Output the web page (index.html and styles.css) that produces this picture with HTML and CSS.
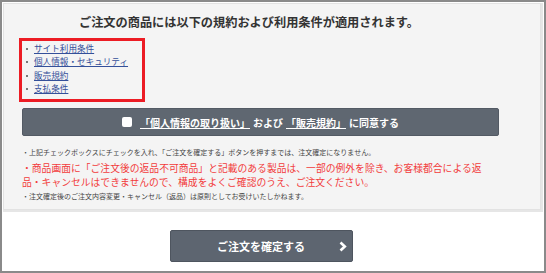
FILE: index.html
```html
<!DOCTYPE html>
<html lang="ja">
<head>
  <meta charset="UTF-8" />
  <meta name="viewport" content="width=device-width, initial-scale=1.0" />
  <title>ご注文の確認</title>
  <link rel="stylesheet" href="styles.css">
</head>
<body>

  <div class="frame">
    <div class="terms-box">
      <h2 class="terms-title">ご注文の商品には以下の規約および利用条件が適用されます。</h2>

      <ul class="terms-links">
        <li><a href="#">サイト利用条件</a></li>
        <li><a href="#">個人情報・セキュリティ</a></li>
        <li><a href="#">販売規約</a></li>
        <li><a href="#">支払条件</a></li>
      </ul>

      <label class="agree-bar">
        <span class="agree-check"></span>
        <span class="agree-text"><a href="#">「個人情報の取り扱い」</a>および<a href="#">「販売規約」</a>に同意する</span>
      </label>

      <div class="notes">
        <p class="note">・上記チェックボックスにチェックを入れ、「ご注文を確定する」ボタンを押すまでは、注文確定になりません。</p>
        <p class="warn">・商品画面に「ご注文後の返品不可商品」と記載のある製品は、一部の例外を除き、お客様都合による返品・キャンセルはできませんので、構成をよくご確認のうえ、ご注文ください。</p>
        <p class="note last">・注文確定後のご注文内容変更・キャンセル（返品）は原則としてお受けいたしかねます。</p>
      </div>
    </div>

    <div class="confirm-row">
      <button class="confirm-btn">
        ご注文を確定する
        <svg class="chevron" width="8" height="11" viewBox="0 0 8 11">
          <path d="M1.5 1.5 L5.8 5.5 L1.5 9.5" fill="none" stroke="#fff" stroke-width="2.6" />
        </svg>
      </button>
    </div>
  </div>

</body>
</html>
```

FILE: styles.css
```css
* {
  box-sizing: border-box;
  margin: 0;
  padding: 0;
}

body {
  background: #ffffff;
  font-family: "Noto Sans CJK JP", "Noto Sans", sans-serif;
  color: #333;
}

.frame {
  width: 546px;
  height: 273px;
  border: 2px solid #8a8a8a;
  padding: 1px;
}

.terms-box {
  width: 538px;
  background: #f4f4f4;
  border: 1px solid #e2e2e2;
  box-shadow: 1px 1px 0 1px #e6e6e6;
  padding: 10px 40px 6px 18px;
}

.terms-title {
  font-size: 12.2px;
  line-height: 16px;
  font-weight: bold;
  text-align: center;
  color: #333;
  padding-right: 24px;
}

.terms-links {
  list-style: none;
  width: 126px;
  margin: 8px 0 0 -3px;
  border: 3px solid #ec1c24;
  padding: 1px 4px 4px 4px;
}

.terms-links li {
  font-size: 8.6px;
  line-height: 13.3px;
  padding-left: 8px;
  position: relative;
}

.terms-links li::before {
  content: "";
  position: absolute;
  left: 0;
  top: 6px;
  width: 2px;
  height: 2px;
  background: #777;
}

.terms-links a {
  color: #34509a;
}

.agree-bar {
  display: flex;
  justify-content: center;
  align-items: center;
  gap: 5px;
  height: 28px;
  margin-top: 6px;
  width: 477px;
  background: #5f6771;
  border: 1px solid #535a64;
  border-radius: 2px;
  color: #fff;
  font-size: 10px;
  font-weight: bold;
}

.agree-check {
  width: 10px;
  height: 10px;
  background: #fff;
  border-radius: 2px;
}

.agree-text a {
  color: #fff;
  margin: 0 3px;
}

.notes {
  margin-top: 10px;
}

.note {
  font-size: 7px;
  line-height: 12px;
  color: #444;
}

.note.last {
  line-height: 14px;
}

.warn {
  max-width: 466px;
  padding-top: 3px;
  font-size: 9.8px;
  line-height: 14px;
  color: #f23c3c;
}

.confirm-row {
  display: flex;
  justify-content: center;
  padding: 20px 24px 0 0;
}

.confirm-btn {
  position: relative;
  width: 183px;
  height: 32px;
  background: #5d6570;
  border: 1px solid #4e555f;
  border-radius: 2px;
  color: #fff;
  font-family: inherit;
  font-size: 11px;
  font-weight: bold;
}

.chevron {
  position: absolute;
  right: 5px;
  top: 10px;
}
```
